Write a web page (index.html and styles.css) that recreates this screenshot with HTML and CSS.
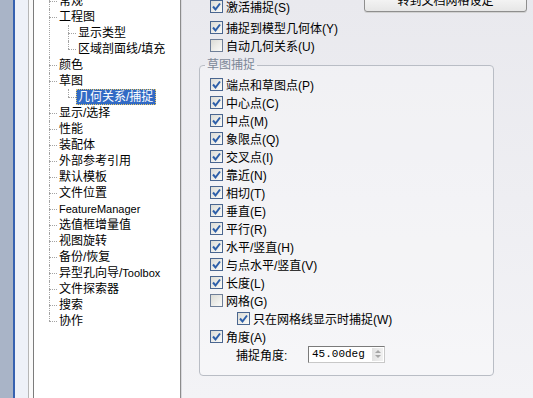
FILE: index.html
```html
<!DOCTYPE html>
<html>
<head lang="zh">
    <meta charset="UTF-8">
    <title>系统选项</title>
    <link rel="stylesheet" href="styles.css">
</head>
<body>
<div class="window">
    <div class="edge"></div>

    <div class="tree">
        <ul class="tree-list">
            <li>常规</li>
            <li>工程图
                <ul>
                    <li>显示类型</li>
                    <li>区域剖面线/填充</li>
                </ul>
            </li>
            <li>颜色</li>
            <li>草图
                <ul>
                    <li><span class="selected">几何关系/捕捉</span></li>
                </ul>
            </li>
            <li>显示/选择</li>
            <li>性能</li>
            <li>装配体</li>
            <li>外部参考引用</li>
            <li>默认模板</li>
            <li>文件位置</li>
            <li><span class="en">FeatureManager</span></li>
            <li>选值框增量值</li>
            <li>视图旋转</li>
            <li>备份/恢复</li>
            <li>异型孔向导/<span class="en">Toolbox</span></li>
            <li>文件探索器</li>
            <li>搜索</li>
            <li>协作</li>
        </ul>
    </div>

    <div class="panel">
        <div class="top">
            <div class="checks">
                <div class="row first"><span class="cb"><svg viewBox="0 0 11 11"><polyline points="2,5.5 4.5,8.5 9,2.5"/></svg></span>激活捕捉(S)</div>
                <div class="row"><span class="cb"><svg viewBox="0 0 11 11"><polyline points="2,5.5 4.5,8.5 9,2.5"/></svg></span>捕捉到模型几何体(Y)</div>
                <div class="row"><span class="cb off"></span>自动几何关系(U)</div>
            </div>
            <div class="btn">转到文档网格设定</div>
        </div>

        <fieldset class="group">
            <legend>草图捕捉</legend>
            <div class="row"><span class="cb"><svg viewBox="0 0 11 11"><polyline points="2,5.5 4.5,8.5 9,2.5"/></svg></span>端点和草图点(P)</div>
            <div class="row"><span class="cb"><svg viewBox="0 0 11 11"><polyline points="2,5.5 4.5,8.5 9,2.5"/></svg></span>中心点(C)</div>
            <div class="row"><span class="cb"><svg viewBox="0 0 11 11"><polyline points="2,5.5 4.5,8.5 9,2.5"/></svg></span>中点(M)</div>
            <div class="row"><span class="cb"><svg viewBox="0 0 11 11"><polyline points="2,5.5 4.5,8.5 9,2.5"/></svg></span>象限点(Q)</div>
            <div class="row"><span class="cb"><svg viewBox="0 0 11 11"><polyline points="2,5.5 4.5,8.5 9,2.5"/></svg></span>交叉点(I)</div>
            <div class="row"><span class="cb"><svg viewBox="0 0 11 11"><polyline points="2,5.5 4.5,8.5 9,2.5"/></svg></span>靠近(N)</div>
            <div class="row"><span class="cb"><svg viewBox="0 0 11 11"><polyline points="2,5.5 4.5,8.5 9,2.5"/></svg></span>相切(T)</div>
            <div class="row"><span class="cb"><svg viewBox="0 0 11 11"><polyline points="2,5.5 4.5,8.5 9,2.5"/></svg></span>垂直(E)</div>
            <div class="row"><span class="cb"><svg viewBox="0 0 11 11"><polyline points="2,5.5 4.5,8.5 9,2.5"/></svg></span>平行(R)</div>
            <div class="row"><span class="cb"><svg viewBox="0 0 11 11"><polyline points="2,5.5 4.5,8.5 9,2.5"/></svg></span>水平/竖直(H)</div>
            <div class="row"><span class="cb"><svg viewBox="0 0 11 11"><polyline points="2,5.5 4.5,8.5 9,2.5"/></svg></span>与点水平/竖直(V)</div>
            <div class="row"><span class="cb"><svg viewBox="0 0 11 11"><polyline points="2,5.5 4.5,8.5 9,2.5"/></svg></span>长度(L)</div>
            <div class="row"><span class="cb off"></span>网格(G)</div>
            <div class="row sub"><span class="cb"><svg viewBox="0 0 11 11"><polyline points="2,5.5 4.5,8.5 9,2.5"/></svg></span>只在网格线显示时捕捉(W)</div>
            <div class="row"><span class="cb"><svg viewBox="0 0 11 11"><polyline points="2,5.5 4.5,8.5 9,2.5"/></svg></span>角度(A)</div>
            <div class="row angle">
                <span class="angle-label">捕捉角度:</span>
                <div class="spin">
                    <span class="val">45.00deg</span>
                    <span class="spin-btns"><i class="up"></i><i class="down"></i></span>
                </div>
            </div>
        </fieldset>
    </div>
</div>
</body>
</html>
```

FILE: styles.css
```css
body, ul, li, fieldset, legend {
    margin: 0;
    padding: 0;
}
body {
    width: 533px;
    height: 398px;
    overflow: hidden;
    font-family: "Liberation Sans", "Noto Sans CJK SC", sans-serif;
    font-size: 12px;
    color: #000;
}
.window {
    display: flex;
    height: 398px;
}

/* 左侧窗口边框 */
.edge {
    width: 34px;
    flex: none;
    background: linear-gradient(to right,
        #a9b4c7 0, #a9b4c7 13px,
        #3661b0 13px, #3661b0 15px,
        #eef1f8 15px, #eef1f8 28px,
        #b6b6b6 28px, #b6b6b6 29px,
        #fafafa 29px, #fafafa 33px,
        #7c7c7c 33px, #7c7c7c 34px);
}

/* 树 */
.tree {
    width: 146px;
    flex: none;
    background: #fff;
    border-right: 1px solid #8c8c8c;
    overflow: hidden;
}
.tree ul {
    list-style: none;
    padding: 0;
}
.tree-list {
    margin: -7px 0 0 15px;
}
.tree ul ul {
    margin-left: 9px;
}
.tree li {
    position: relative;
    padding-left: 10px;
    line-height: 16px;
    white-space: nowrap;
}
.tree li::before {
    content: "";
    position: absolute;
    left: 0;
    top: 8px;
    width: 8px;
    border-top: 1px dotted #a3a3a3;
}
.tree li::after {
    content: "";
    position: absolute;
    left: 0;
    top: 0;
    bottom: 0;
    border-left: 1px dotted #a3a3a3;
}
.tree li:last-child::after {
    bottom: auto;
    height: 8px;
}
.tree .en {
    font-size: 11px;
}
.tree .selected {
    display: inline-block;
    margin-left: -2px;
    padding: 0 3px 0 2px;
    background: #316ac5;
    color: #fff;
    outline: 1px dotted #e6c86a;
    outline-offset: -1px;
}

/* 右侧面板 */
.panel {
    flex: 1;
    padding: 0 6px 0 17px;
    border-left: 1px solid #d9d9de;
    background: linear-gradient(#e9e9ee, #f3f3f6);
    overflow: hidden;
}
.top {
    display: flex;
    justify-content: space-between;
    align-items: flex-start;
}
.checks {
    padding-left: 11px;
    margin-top: -3px;
}
.row {
    display: flex;
    align-items: center;
    height: 18px;
    white-space: nowrap;
}
.row.first {
    margin-bottom: 3px;
}
.cb {
    width: 13px;
    height: 13px;
    box-sizing: border-box;
    flex: none;
    margin-right: 3px;
    border: 1px solid #4a6690;
    background: linear-gradient(135deg, #dcdcd6, #fbfbf9);
}
.cb svg {
    display: block;
    width: 11px;
    height: 11px;
}
.cb polyline {
    fill: none;
    stroke: #2d5fa9;
    stroke-width: 2;
}
.cb.off {
    border-color: #6f7f98;
}
.btn {
    width: 163px;
    height: 22px;
    box-sizing: border-box;
    margin-top: -10px;
    border: 1px solid #8e8e8e;
    border-radius: 3px;
    background: linear-gradient(#fdfdfd, #e6e6e6);
    box-shadow: 0 1px 0 #d2d2d2;
    text-align: center;
    line-height: 20px;
}

.group {
    width: 295px;
    box-sizing: border-box;
    min-width: 0;
    margin-top: 4px;
    padding: 3px 10px 12px;
    border: 1px solid #b9bdc5;
    border-radius: 4px;
    background: rgba(255, 255, 255, 0.3);
}
.group legend {
    margin-left: -5px;
    padding: 0 2px;
    line-height: 14px;
    color: #7d8898;
}
.row.sub {
    padding-left: 27px;
}
.angle-label {
    width: 72px;
    margin-left: 26px;
}
.spin {
    display: flex;
    width: 77px;
    height: 17px;
    box-sizing: border-box;
    border: 1px solid #7a7a7a;
    border-right-color: #c8c8c8;
    border-bottom-color: #c8c8c8;
    background: #fff;
}
.spin .val {
    flex: 1;
    padding-left: 3px;
    font-family: "Liberation Mono", monospace;
    font-size: 11px;
    line-height: 15px;
}
.spin-btns {
    width: 11px;
    margin: 1px 1px 1px 0;
    display: flex;
    flex-direction: column;
    justify-content: center;
    align-items: center;
    gap: 2px;
    background: linear-gradient(90deg, #e2e2e2, #f1f1f1);
}
.spin-btns i {
    width: 0;
    height: 0;
    border-left: 3px solid transparent;
    border-right: 3px solid transparent;
}
.spin-btns .up {
    border-bottom: 3px solid #a6a6a6;
}
.spin-btns .down {
    border-top: 3px solid #a6a6a6;
}
```
